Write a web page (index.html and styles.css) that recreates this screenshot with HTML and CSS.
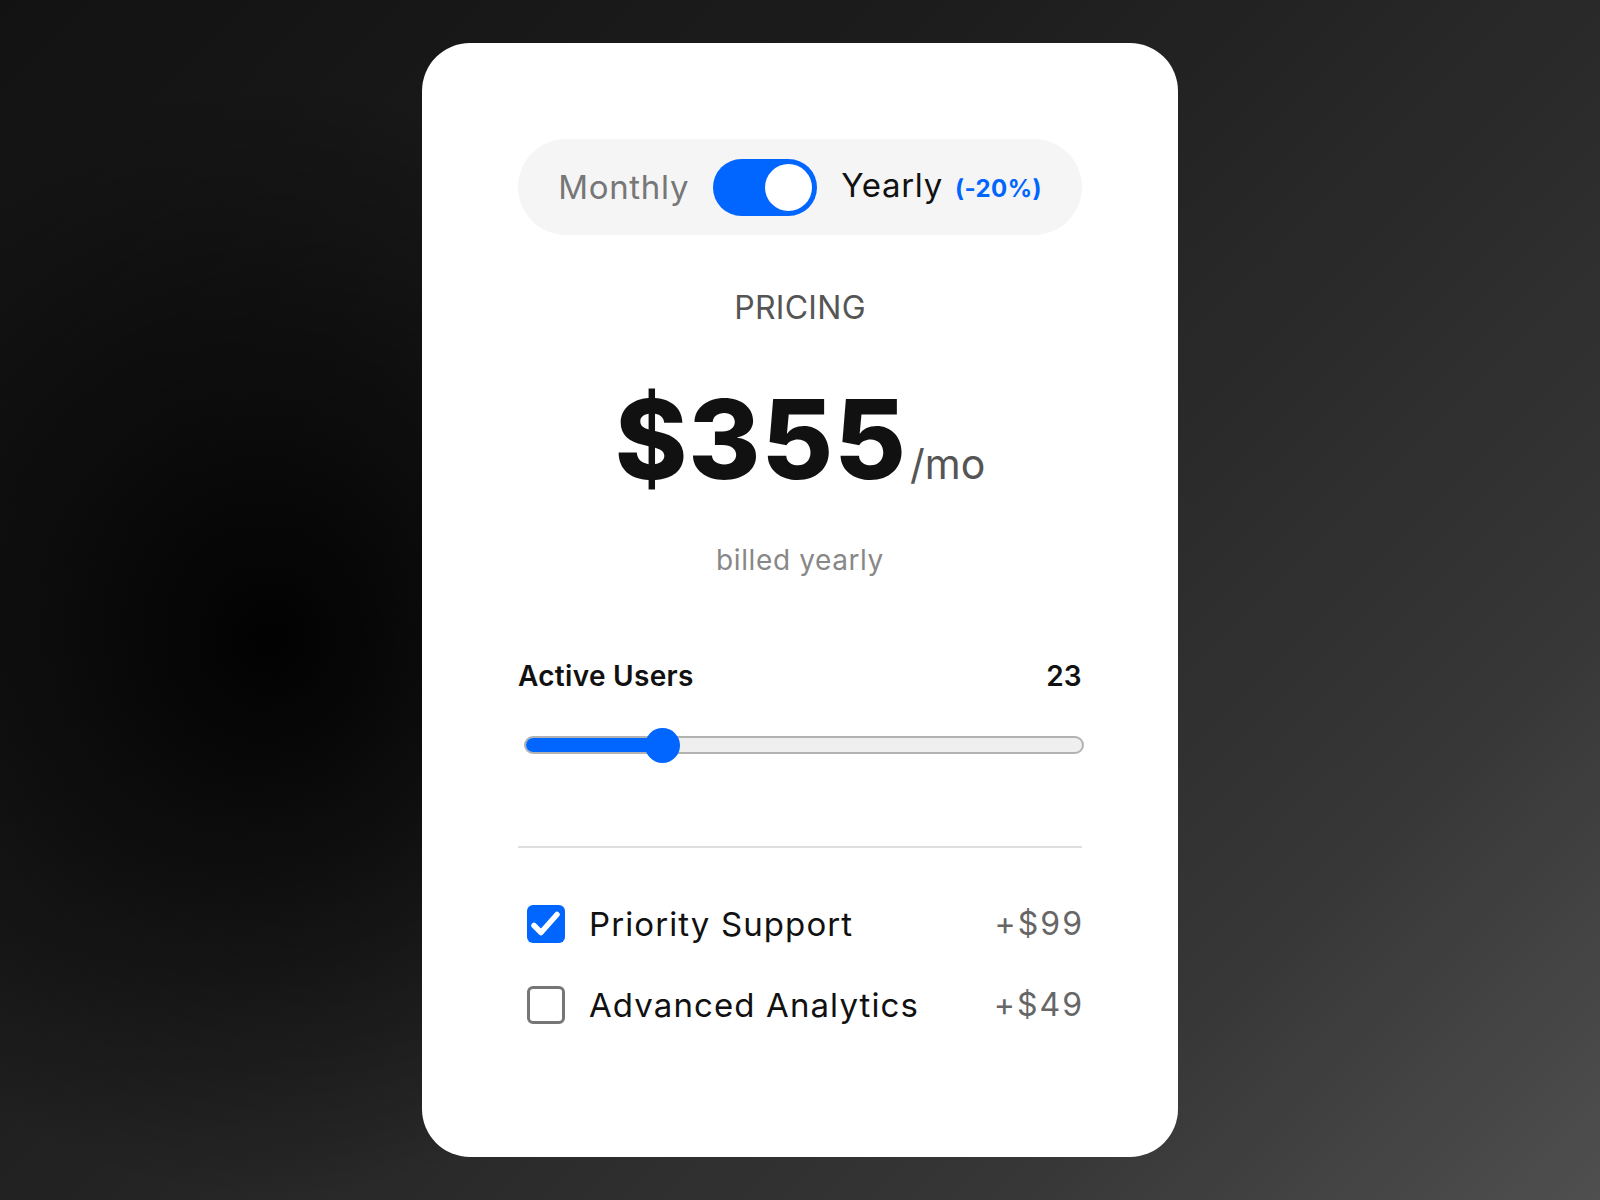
FILE: index.html
```html
<!DOCTYPE html>
<html lang="en">
<head>
<meta charset="utf-8">
<title>Pricing</title>
<link rel="stylesheet" href="styles.css">
</head>
<body>
<main class="card">
  <div class="billing-toggle">
    <span class="opt opt-muted">Monthly</span>
    <span class="switch" role="switch" aria-checked="true"><span class="knob"></span></span>
    <span class="opt opt-active">Yearly<span class="save">(-20%)</span></span>
  </div>

  <div class="eyebrow">PRICING</div>
  <div class="price"><span class="amount">$355</span><span class="per">/mo</span></div>
  <div class="billed">billed yearly</div>

  <section class="users">
    <div class="users-head"><span>Active Users</span><span>23</span></div>
    <div class="slider" role="slider" aria-valuemin="0" aria-valuemax="100" aria-valuenow="23">
      <div class="track"><div class="fill" style="width:25%"></div></div>
      <div class="thumb" style="left:calc(17.5px + (100% - 35px) * 0.23)"></div>
    </div>
  </section>

  <hr class="divider">

  <ul class="addons">
    <li class="addon">
      <span class="check is-checked"><svg viewBox="0 0 38 38" width="38" height="38"><path d="M7 20.5 L14 27.5 L30 9.5" fill="none" stroke="#fff" stroke-width="5.5" stroke-linecap="round" stroke-linejoin="round"/></svg></span>
      <span class="addon-name">Priority Support</span>
      <span class="addon-price">+$99</span>
    </li>
    <li class="addon">
      <span class="check"></span>
      <span class="addon-name">Advanced Analytics</span>
      <span class="addon-price">+$49</span>
    </li>
  </ul>
</main>
</body>
</html>
```

FILE: styles.css
```css
* { box-sizing: border-box; }

html, body { height: 100%; }

body {
  margin: 0;
  min-height: 100vh;
  display: flex;
  align-items: center;
  justify-content: center;
  font-family: "Inter", "Open Sans", sans-serif;
  background:
    radial-gradient(ellipse 520px 560px at 270px 640px, rgba(0,0,0,0.95), rgba(0,0,0,0) 100%),
    linear-gradient(135deg, #121212 0%, #1d1d1d 35%, #2a2a2a 58%, #363636 78%, #4f4f4f 100%);
}

.card {
  width: 756px;
  height: 1114px;
  background: #fff;
  border-radius: 48px;
  padding: 96px;
  display: flex;
  flex-direction: column;
}

/* billing toggle */
.billing-toggle {
  height: 96px;
  border-radius: 48px;
  background: #f5f5f5;
  display: flex;
  align-items: center;
  justify-content: center;
  gap: 24px;
}

.opt {
  font-size: 33px;
  line-height: 40px;
  letter-spacing: 0.7px;
}
.opt-muted { color: #777; }
.opt-active { color: #111; display: flex; align-items: baseline; }

.save {
  margin-left: 12px;
  font-size: 24px;
  font-weight: 700;
  color: #0066ff;
  letter-spacing: 0.4px;
}

.switch {
  width: 104px;
  height: 57px;
  border-radius: 29px;
  background: #0066ff;
  display: flex;
  align-items: center;
  justify-content: flex-end;
  padding-right: 5px;
}
.knob {
  width: 47px;
  height: 47px;
  border-radius: 50%;
  background: #fff;
}

/* headline */
.eyebrow {
  margin-top: 57px;
  text-align: center;
  font-size: 32px;
  line-height: 32px;
  color: #555;
  letter-spacing: 0.3px;
}

.price {
  margin-top: 59px;
  display: flex;
  justify-content: center;
  align-items: baseline;
  line-height: 112px;
}
.amount {
  font-size: 110px;
  font-weight: 800;
  color: #111;
  letter-spacing: 1px;
}
.per {
  font-size: 41px;
  color: #555;
  margin-left: 3px;
}

.billed {
  margin-top: 26px;
  text-align: center;
  font-size: 28px;
  line-height: 28px;
  color: #888;
  letter-spacing: 0.6px;
}

/* users */
.users { margin-top: 88px; }
.users-head {
  display: flex;
  justify-content: space-between;
  font-size: 28px;
  line-height: 28px;
  font-weight: 600;
  color: #111;
  letter-spacing: 0.3px;
}

.slider {
  position: relative;
  margin-top: 37px;
  height: 36px;
  margin-left: 6px;
  margin-right: -2px;
  display: flex;
  align-items: center;
}
.track {
  width: 100%;
  height: 18px;
  border-radius: 9px;
  background: #efefef;
  border: 2px solid #b2b2b2;
  overflow: hidden;
}
.fill {
  height: 100%;
  background: #0066ff;
}
.thumb {
  position: absolute;
  top: 0.5px;
  width: 35px;
  height: 35px;
  margin-left: -17.5px;
  border-radius: 50%;
  background: #0066ff;
}

.divider {
  margin: 83px 0 0;
  border: 0;
  height: 2px;
  background: #dedede;
}

/* add-ons */
.addons {
  list-style: none;
  margin: 56px 0 0;
  padding: 0;
  display: flex;
  flex-direction: column;
  gap: 41px;
}
.addon {
  display: flex;
  align-items: center;
  height: 40px;
}
.check {
  width: 38px;
  height: 38px;
  margin-left: 9px;
  border-radius: 6px;
  border: 3px solid #767676;
  background: #fff;
  flex: none;
  display: flex;
}
.check.is-checked {
  border: 0;
  background: #0066ff;
}
.addon-name {
  margin-left: 24px;
  flex: 1;
  font-size: 33px;
  line-height: 40px;
  color: #111;
  letter-spacing: 1.1px;
}
.addon-price {
  font-size: 32px;
  line-height: 40px;
  color: #666;
  letter-spacing: 2px;
  margin-right: -2px;
}
```
